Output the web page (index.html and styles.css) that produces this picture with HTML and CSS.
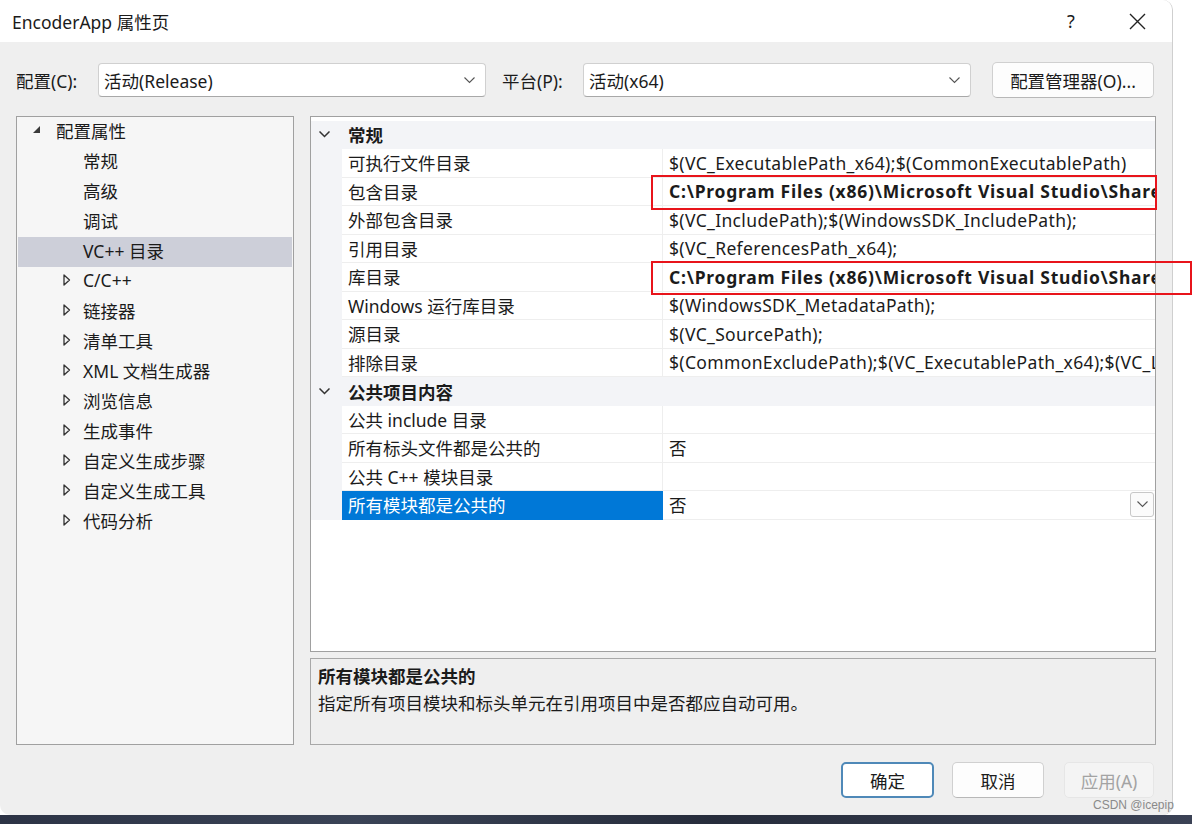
FILE: index.html
```html
<!DOCTYPE html>
<html lang="zh-CN">
<head>
<meta charset="utf-8">
<title>EncoderApp 属性页</title>
<link rel="stylesheet" href="styles.css">
</head>
<body>
<div class="page">
  <div class="screen">
    <div class="dialog">
      <div class="titlebar">
        <span class="title">EncoderApp 属性页</span>
        <span class="tb-help">?</span>
        <span class="tb-close"><svg width="17" height="17" viewBox="0 0 17 17"><path d="M1 1 L16 16 M16 1 L1 16" stroke="#222" stroke-width="1.4" fill="none"/></svg></span>
      </div>
      <div class="content">
        <div class="config-row">
          <span class="lbl">配置(C):</span>
          <div class="combo"><span>活动(Release)</span><svg class="chev" width="11" height="7" viewBox="0 0 11 7"><path d="M0.5 0.5 L5.5 5.5 L10.5 0.5" stroke="#555" stroke-width="1.1" fill="none"/></svg></div>
          <span class="lbl lbl2">平台(P):</span>
          <div class="combo"><span>活动(x64)</span><svg class="chev" width="11" height="7" viewBox="0 0 11 7"><path d="M0.5 0.5 L5.5 5.5 L10.5 0.5" stroke="#555" stroke-width="1.1" fill="none"/></svg></div>
          <button class="btn mgr">配置管理器(O)...</button>
        </div>
        <div class="main">
          <div class="tree">
            <div class="ti root"><svg class="exp" width="8" height="8" viewBox="0 0 8 8"><path d="M7 0 L7 7 L0 7 Z" fill="#3a3a3a"/></svg><span>配置属性</span></div>
            <div class="ti child"><span>常规</span></div>
            <div class="ti child"><span>高级</span></div>
            <div class="ti child"><span>调试</span></div>
            <div class="ti child sel"><span>VC++ 目录</span></div>
            <div class="ti coll"><svg class="col" width="8" height="12" viewBox="0 0 8 12"><path d="M1 1 L6.5 6 L1 11 Z" stroke="#333" stroke-width="1.3" fill="none" stroke-linejoin="round"/></svg><span>C/C++</span></div>
            <div class="ti coll"><svg class="col" width="8" height="12" viewBox="0 0 8 12"><path d="M1 1 L6.5 6 L1 11 Z" stroke="#333" stroke-width="1.3" fill="none" stroke-linejoin="round"/></svg><span>链接器</span></div>
            <div class="ti coll"><svg class="col" width="8" height="12" viewBox="0 0 8 12"><path d="M1 1 L6.5 6 L1 11 Z" stroke="#333" stroke-width="1.3" fill="none" stroke-linejoin="round"/></svg><span>清单工具</span></div>
            <div class="ti coll"><svg class="col" width="8" height="12" viewBox="0 0 8 12"><path d="M1 1 L6.5 6 L1 11 Z" stroke="#333" stroke-width="1.3" fill="none" stroke-linejoin="round"/></svg><span>XML 文档生成器</span></div>
            <div class="ti coll"><svg class="col" width="8" height="12" viewBox="0 0 8 12"><path d="M1 1 L6.5 6 L1 11 Z" stroke="#333" stroke-width="1.3" fill="none" stroke-linejoin="round"/></svg><span>浏览信息</span></div>
            <div class="ti coll"><svg class="col" width="8" height="12" viewBox="0 0 8 12"><path d="M1 1 L6.5 6 L1 11 Z" stroke="#333" stroke-width="1.3" fill="none" stroke-linejoin="round"/></svg><span>生成事件</span></div>
            <div class="ti coll"><svg class="col" width="8" height="12" viewBox="0 0 8 12"><path d="M1 1 L6.5 6 L1 11 Z" stroke="#333" stroke-width="1.3" fill="none" stroke-linejoin="round"/></svg><span>自定义生成步骤</span></div>
            <div class="ti coll"><svg class="col" width="8" height="12" viewBox="0 0 8 12"><path d="M1 1 L6.5 6 L1 11 Z" stroke="#333" stroke-width="1.3" fill="none" stroke-linejoin="round"/></svg><span>自定义生成工具</span></div>
            <div class="ti coll"><svg class="col" width="8" height="12" viewBox="0 0 8 12"><path d="M1 1 L6.5 6 L1 11 Z" stroke="#333" stroke-width="1.3" fill="none" stroke-linejoin="round"/></svg><span>代码分析</span></div>
          </div>
          <div class="right">
            <div class="grid">
              <div class="cat"><svg class="cchev" width="11" height="7" viewBox="0 0 11 7"><path d="M0.5 0.5 L5.5 5.5 L10.5 0.5" stroke="#333" stroke-width="1.5" fill="none"/></svg><span>常规</span></div>
              <div class="row"><div class="gut"></div><div class="name">可执行文件目录</div><div class="val"><span class="vt">$(VC_ExecutablePath_x64);$(CommonExecutablePath)</span></div></div>
              <div class="row"><div class="gut"></div><div class="name">包含目录</div><div class="val bold"><span class="vt">C:\Program Files (x86)\Microsoft Visual Studio\Shared\Python39_64\include;$(IncludePath)</span></div></div>
              <div class="row"><div class="gut"></div><div class="name">外部包含目录</div><div class="val"><span class="vt">$(VC_IncludePath);$(WindowsSDK_IncludePath);</span></div></div>
              <div class="row"><div class="gut"></div><div class="name">引用目录</div><div class="val"><span class="vt">$(VC_ReferencesPath_x64);</span></div></div>
              <div class="row"><div class="gut"></div><div class="name">库目录</div><div class="val bold"><span class="vt">C:\Program Files (x86)\Microsoft Visual Studio\Shared\Python39_64\libs;$(LibraryPath)</span></div></div>
              <div class="row"><div class="gut"></div><div class="name">Windows 运行库目录</div><div class="val"><span class="vt">$(WindowsSDK_MetadataPath);</span></div></div>
              <div class="row"><div class="gut"></div><div class="name">源目录</div><div class="val"><span class="vt">$(VC_SourcePath);</span></div></div>
              <div class="row"><div class="gut"></div><div class="name">排除目录</div><div class="val"><span class="vt">$(CommonExcludePath);$(VC_ExecutablePath_x64);$(VC_LibraryPath_x64)</span></div></div>
              <div class="cat"><svg class="cchev" width="11" height="7" viewBox="0 0 11 7"><path d="M0.5 0.5 L5.5 5.5 L10.5 0.5" stroke="#333" stroke-width="1.5" fill="none"/></svg><span>公共项目内容</span></div>
              <div class="row"><div class="gut"></div><div class="name">公共 include 目录</div><div class="val"></div></div>
              <div class="row"><div class="gut"></div><div class="name">所有标头文件都是公共的</div><div class="val"><span class="vt">否</span></div></div>
              <div class="row"><div class="gut"></div><div class="name">公共 C++ 模块目录</div><div class="val"></div></div>
              <div class="row selrow"><div class="gut"></div><div class="name">所有模块都是公共的</div><div class="val"><span class="vt">否</span><span class="ddbtn"><svg width="11" height="7" viewBox="0 0 11 7"><path d="M0.5 0.5 L5.5 5.5 L10.5 0.5" stroke="#555" stroke-width="1.1" fill="none"/></svg></span></div></div>
            </div>
            <div class="desc">
              <div class="dtitle">所有模块都是公共的</div>
              <div class="dtext">指定所有项目模块和标头单元在引用项目中是否都应自动可用。</div>
            </div>
          </div>
        </div>
        <div class="btn-row">
          <button class="btn ok">确定</button>
          <button class="btn cancel">取消</button>
          <button class="btn apply">应用(A)</button>
        </div>
      </div>
    </div>
    <div class="outside"></div>
  </div>
  <div class="desk"></div>
  <div class="mark mark1"></div>
  <div class="mark mark2"></div>
  <div class="watermark">CSDN @icepip</div>
</div>
</body>
</html>
```
FILE: styles.css
```css
* { box-sizing: border-box; }
html, body { margin: 0; padding: 0; }
body {
  background: #ffffff;
  font-family: "Noto Sans", "Noto Sans CJK SC", sans-serif;
  font-size: 18px;
  color: #1b1b1b;
}
.page {
  position: relative;
  width: 1192px;
  height: 824px;
  overflow: hidden;
}
.screen {
  display: flex;
  height: 815px;
}
.dialog {
  flex: 0 0 1173px;
  height: 815px;
  background: #efefef;
  border-right: 1px solid #cfcfcf;
  border-radius: 0 10px 10px 10px;
  overflow: hidden;
  display: flex;
  flex-direction: column;
}
.outside { flex: 1; background: #ffffff; }
.desk {
  height: 9px;
  background: linear-gradient(90deg, #2c3345, #3a4356 30%, #262c3b 60%, #3b4255);
}
.titlebar {
  height: 42px;
  flex: none;
  background: #ffffff;
  display: flex;
  align-items: center;
  padding-left: 12px;
}
.title { font-size: 17.5px; flex: 1; }
.tb-help { font-size: 18px; width: 20px; margin-right: 48px; text-align: center; }
.tb-close { width: 17px; height: 17px; margin-right: 26px; display: flex; }
.content {
  flex: 1;
  padding: 20px 16px 0 16px;
  display: flex;
  flex-direction: column;
  min-width: 0;
}
.config-row {
  height: 36px;
  display: flex;
  align-items: center;
}
.lbl { flex: 0 0 82px; font-size: 17.5px; white-space: nowrap; }
.lbl2 { flex: 0 0 81px; margin-left: 16px; }
.combo {
  flex: 0 0 388px;
  height: 34px;
  background: #ffffff;
  border: 1px solid #d0d0d0;
  border-bottom-color: #a8a8a8;
  border-radius: 4px;
  display: flex;
  align-items: center;
  justify-content: space-between;
  padding: 0 10px 0 5px;
  font-size: 17.5px;
}
.btn {
  font-family: "Noto Sans", "Noto Sans CJK SC", sans-serif;
  font-size: 17.5px;
  color: #1b1b1b;
  background: #fdfdfd;
  border: 1px solid #d0d0d0;
  border-bottom-color: #b8b8b8;
  border-radius: 5px;
  height: 36px;
  padding: 0;
}
.mgr { margin-left: auto; flex: 0 0 162px; margin-right: 2px; }
.main {
  margin-top: 18px;
  height: 629px;
  display: flex;
  gap: 16px;
}
.tree {
  flex: 0 0 278px;
  background: #f6f6f6;
  border: 1px solid #a0a0a0;
  padding-top: 0;
}
.ti {
  height: 30px;
  display: flex;
  align-items: center;
  font-size: 17.5px;
  margin: 0 1px;
  padding-bottom: 4px;
  white-space: nowrap;
}
.ti.root { padding-left: 15px; }
.ti.root .exp { margin-right: 15px; margin-top: 0; }
.ti.child { padding-left: 65px; }
.ti.coll { padding-left: 45px; }
.ti.coll .col { margin-right: 12px; flex: none; }
.ti.sel { background: #cdcfd9; }
.right {
  flex: 1;
  min-width: 0;
  display: flex;
  flex-direction: column;
  gap: 6px;
}
.grid {
  height: 536px;
  background: #ffffff;
  border: 1px solid #a0a0a0;
  padding-top: 3.5px;
  overflow: hidden;
}
.cat {
  height: 28.5px;
  background: #f3f4f7;
  display: flex;
  align-items: center;
  font-weight: bold;
  font-size: 17.5px;
}
.cchev { margin-left: 8px; margin-right: 18px; }
.row {
  height: 28.5px;
  display: flex;
  font-size: 17.5px;
}
.gut { flex: 0 0 31px; background: #f3f4f7; }
.name {
  flex: 0 0 321px;
  padding-left: 6px;
  display: flex;
  align-items: center;
  border-bottom: 1px solid #eeeeee;
  border-right: 1px solid #eeeeee;
  white-space: nowrap;
}
.val {
  flex: 1;
  min-width: 0;
  padding-left: 6px;
  display: flex;
  align-items: center;
  justify-content: space-between;
  white-space: nowrap;
  overflow: hidden;
  border-bottom: 1px solid #eeeeee;
}
.vt { flex: 0 1 auto; min-width: 0; overflow: hidden; letter-spacing: 0.35px; }
.val.bold { font-weight: bold; }
.val.bold .vt { letter-spacing: 0.75px; }
.selrow .name { background: #0078d7; color: #ffffff; border-color: #0078d7; }
.ddbtn {
  flex: none;
  width: 24px;
  height: 25px;
  border: 1px solid #c8c8c8;
  border-radius: 3px;
  background: #fbfbfb;
  display: flex;
  align-items: center;
  justify-content: center;
  margin-right: 1px;
}
.desc {
  height: 87px;
  border: 1px solid #a8a8a8;
  background: #efefef;
  padding: 4px 7px;
  font-size: 17.5px;
}
.dtitle { font-weight: bold; line-height: 27px; }
.dtext { line-height: 27px; }
.btn-row {
  margin-top: 17px;
  display: flex;
  justify-content: flex-end;
  padding-right: 2px;
  gap: 18px;
}
.ok { width: 93px; border: 2px solid #4f89b8; background: #ffffff; }
.cancel { width: 92px; background: #fdfdfd; }
.apply { width: 90px; margin-left: 2px; background: #f4f4f4; color: #a3a3a3; border-color: #e6e6e6; }
.mark {
  position: absolute;
  border: 2px solid #e8141b;
}
.mark1 { left: 651px; top: 175px; width: 506px; height: 35px; }
.mark2 { left: 651px; top: 261px; width: 541px; height: 34px; }
.watermark {
  position: absolute;
  left: 1093px;
  top: 798px;
  font-family: "Liberation Sans", sans-serif;
  font-size: 12px;
  color: #8a8a8a;
}
```
